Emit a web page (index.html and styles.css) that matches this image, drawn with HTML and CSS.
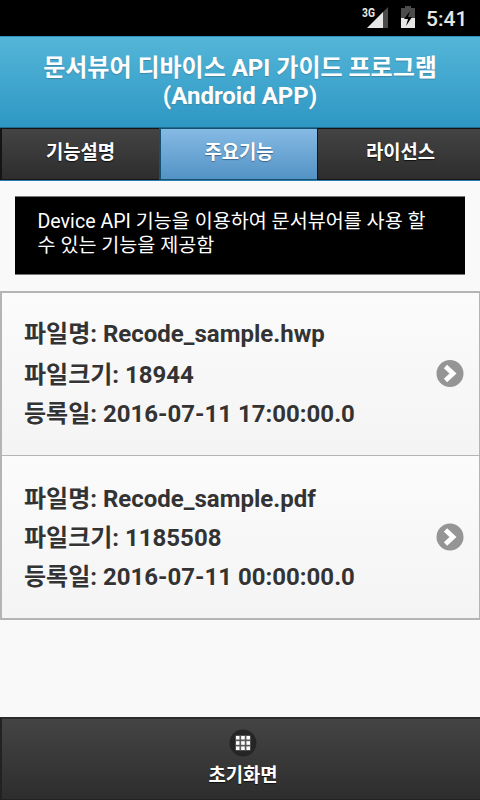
FILE: index.html
```html
<!DOCTYPE html>
<html lang="ko">
<head>
<meta charset="utf-8">
<title>문서뷰어 디바이스 API 가이드 프로그램</title>
<link rel="stylesheet" href="styles.css">
</head>
<body>
<div class="status">
  <svg class="status-icons" width="60" height="36" viewBox="0 0 60 36">
    <path d="M28 7v21h-5V12z" fill="#4b4b4b"/>
    <path d="M7 28L23 12v16z" fill="#e6e6e6"/>
    <path d="M45 8V6h6v2h4v10H41V8z" fill="#4b4b4b"/>
    <path d="M41 18h14v10H41z" fill="#e6e6e6"/>
    <path d="M50 11l-6 8h4l-2 7 6-9h-4z" fill="#000"/>
  </svg>
  <span class="network">3G</span>
  <span class="clock">5:41</span>
</div>
<header class="header">
  <h1>문서뷰어 디바이스 API 가이드 프로그램<br>(Android APP)</h1>
</header>
<nav class="tabs">
  <a class="tab">기능설명</a>
  <a class="tab active">주요기능</a>
  <a class="tab">라이선스</a>
</nav>
<main class="content">
  <p class="notice">Device API 기능을 이용하여 문서뷰어를 사용 할<br>수 있는 기능을 제공함</p>
  <ul class="files">
    <li class="file first">
      <div class="info">
        <div class="line name">파일명: Recode_sample.hwp</div>
        <div class="line">파일크기: 18944</div>
        <div class="line">등록일: 2016-07-11 17:00:00.0</div>
      </div>
      <svg class="arrow" width="28" height="28" viewBox="0 0 28 28"><circle cx="14" cy="13.500" r="13.500" fill="#959595"/><path d="M9.500 6.500l7.500 7-7.500 7" fill="none" stroke="#fff" stroke-width="4.800"/></svg>
    </li>
    <li class="file">
      <div class="info">
        <div class="line name">파일명: Recode_sample.pdf</div>
        <div class="line">파일크기: 1185508</div>
        <div class="line">등록일: 2016-07-11 00:00:00.0</div>
      </div>
      <svg class="arrow" width="28" height="28" viewBox="0 0 28 28"><circle cx="14" cy="14" r="13.500" fill="#959595"/><path d="M9.500 7l7.500 7-7.500 7" fill="none" stroke="#fff" stroke-width="4.800"/></svg>
    </li>
  </ul>
</main>
<footer class="footer">
  <svg class="grid-icon" width="28" height="28" viewBox="0 0 28 28">
    <circle cx="14" cy="14" r="13.500" fill="#252525"/>
    <path d="M6.500 6.500h15v15h-15z" fill="#777"/>
    <g fill="#fff"><path d="M7 7h3.500v3.500H7zM12.200 7h3.500v3.500h-3.500zM17.500 7H21v3.500h-3.500zM7 12.200h3.500v3.500H7zM12.200 12.200h3.500v3.500h-3.500zM17.500 12.200H21v3.500h-3.500zM7 17.500h3.500V21H7zM12.200 17.500h3.500V21h-3.500zM17.500 17.500H21V21h-3.500z"/></g>
    <path d="M11.300 6v16M16.600 6v16M6 11.300h16M6 16.600h16" stroke="#555"/>
  </svg>
  <span>초기화면</span>
</footer>
</body>
</html>
```
FILE: styles.css
```css
* { box-sizing: border-box; }
body {
  margin: 0;
  width: 480px;
  height: 800px;
  display: flex;
  flex-direction: column;
  overflow: hidden;
  background: #f9f9f9;
  font-family: Roboto, "Noto Sans CJK KR", sans-serif;
  white-space: nowrap;
}
.status {
  position: relative;
  height: 36px;
  background: #000;
  color: #e6e6e6;
  display: flex;
  justify-content: flex-end;
}
.network {
  position: absolute;
  left: 362px;
  top: 6px;
  font-size: 12.5px;
  line-height: 14px;
  font-weight: 700;
  transform: scaleX(.82);
  transform-origin: left;
}
.clock {
  width: 60px;
  padding-left: 6px;
  font-size: 21px;
  line-height: 38px;
  font-weight: 500;
}
.header {
  height: 92px;
  padding-top: 17px;
  border-top: 1px solid #2e92bc;
  border-bottom: 1px solid #1d6c90;
  background: linear-gradient(#54b6d8, #2e97c4);
}
h1 {
  margin: 0;
  color: #fff;
  text-align: center;
  font-size: 24px;
  line-height: 28px;
  font-weight: 700;
  text-shadow: 0 1px 1px #3e89a8;
}
.tabs {
  height: 53px;
  display: grid;
  grid-template-columns: 159px 158px 163px;
  border-bottom: 1px solid #2b7daf;
}
.tab {
  border: solid #141414;
  border-width: 1px 0 1px 2px;
  background: linear-gradient(#444, #2d2d2d);
  color: #fff;
  font-size: 18.8px;
  line-height: 48px;
  font-weight: 700;
  text-align: center;
  text-shadow: 0 1px 1px #111;
}
.tab.active {
  border-color: #145072;
  background: linear-gradient(#85bae4, #5393c5);
  text-shadow: 0 1px 1px #3e6790;
}
.tab:last-child {
  border-left-width: 1px;
  padding-left: 3px;
}
.content { flex: 1; padding-top: 15px; }
.notice {
  margin: 0 15px;
  height: 79px;
  padding: 13px 0 0 22.5px;
  border: solid #777;
  border-width: 1px 0;
  background: #000;
  color: #fff;
  font-size: 19.6px;
  line-height: 24px;
}
.files {
  list-style: none;
  margin: 16px 0 0;
  padding: 0;
  border: 2px solid #b4b4b4;
  border-right-width: 1px;
}
.file {
  height: 162px;
  padding: 24px 15px 0 22px;
  display: flex;
  justify-content: space-between;
  background: linear-gradient(#fbfbfb, #f4f4f4);
  color: #333;
  font-size: 24px;
  font-weight: 700;
  text-shadow: 0 1px 0 #fff;
}
.file.first {
  height: 163px;
  padding-top: 22px;
  border-bottom: 1px solid #b4b4b4;
}
.line { height: 39px; line-height: 39px; }
.first .name { height: 41px; }
.arrow { margin-top: 43px; }
.first .arrow { margin-top: 45px; }
.footer {
  height: 83px;
  padding: 10px 0 0 4px;
  display: flex;
  flex-direction: column;
  align-items: center;
  border-top: 2px solid #2b2b2b;
  border-bottom: 1px solid #222;
  border-left: 2px solid #222;
  background: linear-gradient(#444, #2d2d2d);
  color: #fff;
  font-size: 18.8px;
  line-height: 39px;
  font-weight: 700;
  text-shadow: 0 1px 1px #111;
}
```
